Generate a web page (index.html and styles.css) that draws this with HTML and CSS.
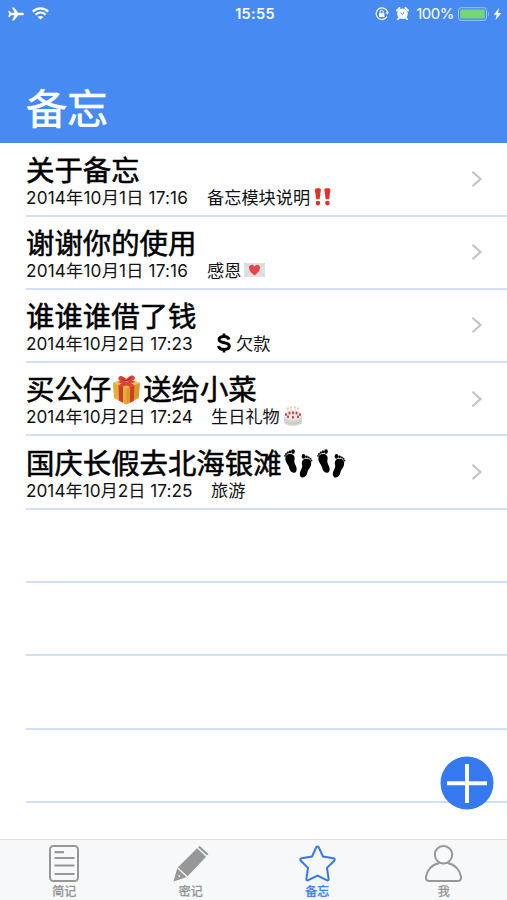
FILE: index.html
```html
<!DOCTYPE html>
<html lang="zh-CN">
<head>
<meta charset="utf-8">
<title>备忘</title>
<link rel="stylesheet" href="styles.css">
</head>
<body>
<svg class="defs" width="0" height="0" aria-hidden="true">
  <symbol id="chevron" viewBox="0 0 12 18"><path d="M1.500 1.800 9.500 9l-8 7.200" fill="none" stroke="#c4c4c7" stroke-width="2.200"/></symbol>
  <symbol id="feet" viewBox="0 0 30 30">
    <g id="foot"><path d="M1.300 9.300C1.300 6 4 4.500 7 5c3.200.6 4.200 3.200 3.400 6-.4 2 .3 3.500 1.400 5.700 1.500 3 1.100 6.400-1.300 7-2.700.6-4.700-1.700-5.400-4.900C4.500 15.500 1.300 13.700 1.300 9.300Z"/>
    <ellipse cx="9" cy="2.600" rx="1.800" ry="2.300"/><circle cx="6" cy="2.900" r="1.300"/><circle cx="3.800" cy="3.700" r="1.100"/><circle cx="2" cy="5" r="1"/><circle cx="1" cy="6.800" r=".9"/></g>
    <use href="#foot" transform="matrix(-1 0 0 1 28.500 4.800)"/>
  </symbol>
</svg>
<div class="app">
  <header class="header">
    <div class="status">
      <div class="status-left">
        <svg width="16" height="14" viewBox="0 0 16 14"><path d="M.3 4h1.300l1.500 1.700h3.400L4 .4h2L10.300 5.700H14c1.200 0 1.900.6 1.900 1.300s-.7 1.300-1.900 1.300h-3.700L6 13.600H4L6.500 8.300H3.100L1.600 10H.3l.8-3Z" fill="#fff"/></svg>
        <svg width="17" height="13" viewBox="0 0 17 13" fill="none" stroke="#fff" stroke-width="2.200"><path d="M.8 4.600c4.300-4.300 11.100-4.300 15.400 0"/><path d="M3.500 7.600c2.800-2.800 7.200-2.800 10 0"/><path d="M8.500 12.500 5.700 9.900c1.500-1.300 4.100-1.300 5.600 0Z" fill="#fff" stroke="none"/></svg>
      </div>
      <div class="time">15:55</div>
      <div class="status-right">
        <svg width="14" height="14" viewBox="0 0 14 14"><path d="M12 9.600A5.800 5.800 0 1 1 12.500 5" fill="none" stroke="#fff" stroke-width="1.200"/><path d="m10.600 5.300 3.200-.2-1.200 2.700Z" fill="#fff"/><rect x="4" y="6" width="5.400" height="4" rx=".6" fill="#fff"/><path d="M5.100 6V4.900a1.600 1.600 0 0 1 3.200 0V6" fill="none" stroke="#fff"/></svg>
        <svg width="13" height="13" viewBox="0 0 13 13"><circle cx="6.500" cy="6.800" r="5.300" fill="#fff"/><path d="M1 3.500 3.500 1M12 3.500 9.500 1M3 11l-1 1.200M10 11l1 1.200" stroke="#fff" stroke-width="1.800" stroke-linecap="round"/><path d="M4.500 6 6.500 7.500 8.300 4.800" fill="none" stroke="#478bf2"/></svg>
        <span class="percent">100%</span>
        <svg width="32" height="14" viewBox="0 0 32 14"><rect x=".5" y=".7" width="28" height="12.600" rx="2.500" fill="none" stroke="#9fc4f5"/><rect x="2.200" y="2.400" width="24.600" height="9.200" rx="1" fill="#76d672"/><path d="M30 5c1.300.7 1.300 3.300 0 4Z" fill="#9fc4f5"/></svg>
        <svg width="9" height="12" viewBox="0 0 9 12"><path d="M6 0 .7 6.800h3L2.500 12 8.300 5H5Z" fill="#fff"/></svg>
      </div>
    </div>
    <h1>备忘</h1>
  </header>
  <main class="list">
    <article class="row">
      <div class="text"><h2>关于备忘</h2><p><span class="date">2014年10月1日 17:16</span><span>备忘模块说明</span><svg class="bangs" width="18" height="18" viewBox="0 0 18 18" fill="#df3429"><path d="M.8 1.500C.8-.2 7-.2 7 1.500L5.600 11.200H2.200ZM10.300 1.500c0-1.700 6.200-1.700 6.200 0l-1.400 9.700h-3.400Z"/><circle cx="3.900" cy="15.100" r="2.300"/><circle cx="13.400" cy="15.100" r="2.300"/></svg></p></div>
      <svg class="chevron"><use href="#chevron"/></svg>
    </article>
    <article class="row">
      <div class="text"><h2>谢谢你的使用</h2><p><span class="date">2014年10月1日 17:16</span><span>感恩</span><svg class="letter" width="21" height="14" viewBox="0 0 21 14"><path d="M0 0h21v14H0Z" fill="#e0e0e2"/><path d="m0 14 8-8M21 14l-8-8M0 0l10 9L21 0" fill="none" stroke="#cbcbd0" stroke-width=".8"/><path d="M10.500 12.600C7.500 10 5 7.800 5 4.700 5 1.300 9 .9 10.500 3.500 12 .9 16 1.300 16 4.700c0 3.100-2.500 5.300-5.500 7.900Z" fill="#e14a4d"/></svg></p></div>
      <svg class="chevron"><use href="#chevron"/></svg>
    </article>
    <article class="row">
      <div class="text"><h2>谁谁谁借了钱</h2><p><span class="date wide">2014年10月2日 17:23</span><svg class="dollar" width="16" height="20" viewBox="0 0 16 20"><path d="M13 6.500C12.400 4.300 10.500 3.500 8 3.500c-3 0-4.900 1.200-4.900 3.100 0 4.700 10.200 1.600 10.200 6.400 0 2.100-2 3.400-5.200 3.400-3 0-5.200-1.200-5.600-3.500" fill="none" stroke="#000" stroke-width="3"/><path d="M8 .5v4M8 15.500v4" stroke="#000" stroke-width="2.600"/></svg><span>欠款</span></p></div>
      <svg class="chevron"><use href="#chevron"/></svg>
    </article>
    <article class="row">
      <div class="text"><h2>买公仔<svg class="gift" width="29" height="30" viewBox="0 0 29 30"><path d="M1 8 14.500 3 28 8 26.800 23 14.500 29.500 2.300 23Z" fill="#d99a27"/><path d="m1 8 13.500 5v16.500L2.300 23Z" fill="#e5ad39"/><path d="m1 8 13.500-5L28 8l-13.500 5.500Z" fill="#f0c55b"/><path d="m6.500 10 4.500 1.700v16L7 25.500ZM18 12l4.500-1.800-.7 15.600L18 27.700Z" fill="#cf3d2a"/><path d="m6 7 4-1.800L22.700 10 18 12ZM19 5l4 2-12.200 4.800L6.300 10Z" fill="#d94531"/><path d="M14 6C9 7 5.500 5.500 6.500 2.500 7.500-.5 12 1 14.500 4.500 17-.2 21.500-.6 22.700 2c1.200 3-3.500 4.700-8.700 4Z" fill="#dc4444"/><path d="M9 3.500 14 6l5-3" fill="none" stroke="#9f2421"/></svg>送给小菜</h2><p><span class="date wide">2014年10月2日 17:24</span><span>生日礼物</span><svg class="cake" width="20" height="21" viewBox="0 0 20 21"><path d="M1 10v6c0 5 18 5 18 0v-6Z" fill="#d6d5d1"/><ellipse cx="10" cy="9.500" rx="9" ry="5" fill="#ebe8e3"/><path d="M5 9V3M8 8V2M12 8V2M15 9V3M10 10V4" stroke="#e7dfcf" stroke-width="1.200"/><path d="M5 3V1.500M8 2V.5M12 2V.5M15 3V1.500" stroke="#efb64b" stroke-width="1.300"/><g fill="#b84054"><ellipse cx="3" cy="8.500" rx="1" ry="1.500"/><ellipse cx="6.500" cy="7" rx="1" ry="1.500"/><ellipse cx="10" cy="6.700" rx="1" ry="1.500"/><ellipse cx="13.500" cy="7" rx="1" ry="1.500"/><ellipse cx="17" cy="8.500" rx="1" ry="1.500"/><ellipse cx="5" cy="10.700" rx="1" ry="1.500"/><ellipse cx="10" cy="11.300" rx="1" ry="1.500"/><ellipse cx="15" cy="10.700" rx="1" ry="1.500"/></g><path d="M2 15.500c4 2.500 12 2.500 16 0" fill="none" stroke="#c0bfbb" stroke-width=".8"/></svg></p></div>
      <svg class="chevron"><use href="#chevron"/></svg>
    </article>
    <article class="row">
      <div class="text"><h2>国庆长假去北海银滩<svg class="feet"><use href="#feet"/></svg><svg class="feet second"><use href="#feet"/></svg></h2><p><span class="date wide">2014年10月2日 17:25</span><span>旅游</span></p></div>
      <svg class="chevron"><use href="#chevron"/></svg>
    </article>
    <div class="row"></div><div class="row"></div><div class="row"></div><div class="row"></div>
  </main>
  <button class="add" aria-label="添加"><svg width="54" height="54" viewBox="0 0 54 54"><circle cx="27" cy="27" r="26.500" fill="#3578ef"/><path d="M7 27.200h40M27 8v39" stroke="#fff" stroke-width="4"/></svg></button>
  <nav class="tabs">
    <a><svg width="30" height="37" viewBox="0 0 30 37" fill="none" stroke="#979797"><rect x="1" y="1" width="28" height="35" rx="3.500" stroke-width="2"/><path d="M5.500 7.200H15M5.500 13h20M5.500 20.500h20M5.500 29h20" stroke-width="2.200"/></svg><span>简记</span></a>
    <a><svg width="36" height="37" viewBox="0 0 36 37"><path d="M26.500.8 35.500 9 34 10.600 25 2.300ZM24.100 3.200l9 8.500-18.500 19.500L5 22.300ZM4.200 23.300l9.300 8.900L.5 36.500ZM5 30.500l1.500 2 1-2Z" fill="#979797" fill-rule="evenodd"/></svg><span>密记</span></a>
    <a class="active"><svg width="37" height="37" viewBox="0 0 37 37"><path d="M17.300 2.300c.5-1 1.900-1 2.400 0L24 11.500l10.500 1.800c1.300.2 1.600 1.500.7 2.400l-7.200 7.200 1.600 10.900c.2 1.300-.8 2-1.900 1.400L18.500 30.500 9.300 35.200c-1.100.6-2.100-.1-1.900-1.400L9 22.900l-7.200-7.200c-.9-.9-.6-2.200.7-2.400L13 11.500Z" fill="none" stroke="#3478ec" stroke-width="2"/></svg><span>备忘</span></a>
    <a><svg width="37" height="37" viewBox="0 0 37 37" fill="none" stroke="#979797" stroke-width="2"><circle cx="18.500" cy="9.700" r="8.700"/><path d="M14.500 18C7 19.500 2 25 1 31.500.7 34 1.500 36 4 36h29c2.500 0 3.300-2 3-4.500C35 25 30 19.500 22.500 18"/></svg><span>我</span></a>
  </nav>
</div>
</body>
</html>
```
FILE: styles.css
```css
* { box-sizing: border-box; }
body { margin: 0; font-family: Inter, "Noto Sans CJK SC", sans-serif; background: #fff; color: #000; }
h1, h2, p { margin: 0; font-weight: 400; }
svg { display: block; flex: none; }
.defs { position: absolute; }
.app { position: relative; width: 507px; height: 900px; display: flex; flex-direction: column; overflow: hidden; }
.header { height: 142.5px; flex: none; background: #478bf2; color: #fff; }
.status { height: 27px; display: grid; grid-template-columns: 1fr 60px 1fr; align-items: center; padding: 0 5px 0 8px; }
.status-left { display: flex; align-items: center; gap: 8px; }
.time { font-size: 14.5px; font-weight: 600; text-align: center; white-space: nowrap; letter-spacing: .3px; }
.status-right { display: flex; align-items: center; justify-content: flex-end; }
.status-right svg + svg { margin-left: 7px; }
.percent { font-size: 15px; margin: 0 4px 0 7px; letter-spacing: -.5px; }
.status-right .percent + svg + svg { margin-left: 3px; }
h1 { padding: 55px 0 0 26px; font-size: 41px; line-height: 54px; -webkit-text-stroke: .6px #fff; }
.list { flex: 1; min-height: 0; overflow: hidden; }
.row { height: 73.3px; margin-left: 26px; border-bottom: 2px solid #cfe0f4; display: flex; align-items: center; justify-content: space-between; padding-right: 24px; }
.row:first-child { height: 74px; padding-top: 1px; }
.text { height: 73px; padding-top: 12px; }
h2 { display: flex; align-items: center; height: 32px; font-size: 28.4px; line-height: 32px; white-space: nowrap; -webkit-text-stroke: .55px #000; }
h2 svg { -webkit-text-stroke: 0; }
p { display: flex; align-items: center; height: 21px; font-size: 17.2px; line-height: 21px; white-space: nowrap; color: #111; }
.date { width: 181px; letter-spacing: .17px; }
.date.wide { width: 185px; letter-spacing: .02px; }
.chevron { width: 12px; height: 18px; }
.bangs { margin-left: 4px; }
.letter { margin-left: 3px; }
.dollar { margin: 0 4px 0 5px; }
.cake { margin-left: 3px; }
.gift { margin: 0 2px 0 1px; }
.feet { width: 30px; height: 30px; margin-left: 2px; }
.feet.second { margin-left: 3px; }
.add { position: absolute; left: 440px; top: 756px; padding: 0; border: 0; background: none; }
.tabs { flex: none; height: 61px; border-top: 1px solid #dedfe1; background: #f7f8fa; display: grid; grid-template-columns: repeat(4, 1fr); padding-left: 1px; }
.tabs a { display: flex; flex-direction: column; align-items: center; padding-top: 5px; color: #929292; }
.tabs span { font-size: 12px; line-height: 16px; margin-top: 2px; -webkit-text-stroke: .3px currentColor; }
.tabs .active { color: #3478ec; }
```
